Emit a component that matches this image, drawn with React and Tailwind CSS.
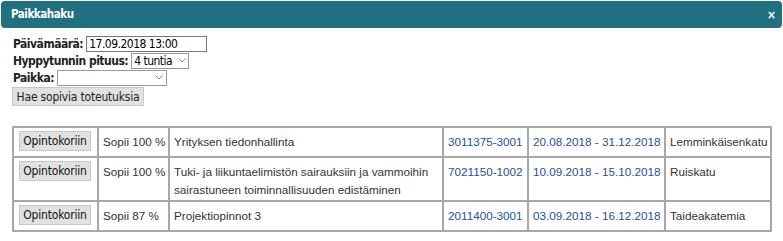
import React from "react";

const rows = [
  { fit: "Sopii 100 %", name: ["Yrityksen tiedonhallinta"], code: "3011375-3001", date: "20.08.2018 - 31.12.2018", place: "Lemminkäisenkatu", h: "h-[30px]" },
  { fit: "Sopii 100 %", name: ["Tuki- ja liikuntaelimistön sairauksiin ja vammoihin", "sairastuneen toiminnallisuuden edistäminen"], code: "7021150-1002", date: "10.09.2018 - 15.10.2018", place: "Ruiskatu", h: "h-[44px]" },
  { fit: "Sopii 87 %", name: ["Projektiopinnot 3"], code: "2011400-3001", date: "03.09.2018 - 16.12.2018", place: "Taideakatemia", h: "h-[30px]" },
];

function Chevron() {
  return (
    <svg width="8" height="5" viewBox="0 0 8 5" className="ml-auto shrink-0">
      <path d="M0.5 0.5 L4 4 L7.5 0.5" fill="none" stroke="#888" strokeWidth="1" />
    </svg>
  );
}

const cell = "border-2 border-[#a8a8a8] pl-[4px] pr-[2px] align-top pt-[5px] leading-[18px] whitespace-nowrap overflow-hidden";

export default function App() {
  const form = { fontFamily: '"DejaVu Sans Condensed", "DejaVu Sans", sans-serif' };
  const arial = { fontFamily: '"Liberation Sans", Arial, sans-serif' };
  return (
    <div className="w-[783px] h-[241px] bg-white overflow-hidden">
      <div className="mx-px mt-px h-[27px] rounded-[4px] bg-[#21707f] flex items-center pl-[10px] pr-[6px]" style={form}>
        <span className="text-white font-bold text-[11.5px] tracking-[-0.45px]">Paikkahaku</span>
        <span className="ml-auto text-white font-bold text-[12px] leading-none">×</span>
      </div>
      <div className="pl-[13px] pt-[7px] text-[12px] tracking-[-0.5px] text-[#222]" style={form}>
        <div className="flex items-center h-[17px]">
          <span className="font-bold">Päivämäärä:</span>
          <div className="ml-[3px] w-[121px] h-[16px] border border-[#777] flex items-center px-[2px] text-black">17.09.2018 13:00</div>
        </div>
        <div className="flex items-center h-[17px]">
          <span className="font-bold">Hyppytunnin pituus:</span>
          <div className="ml-[3px] w-[58px] h-[16px] border border-[#999] flex items-center px-[2px] text-black">4 tuntia<Chevron /></div>
        </div>
        <div className="flex items-center h-[17px]">
          <span className="font-bold">Paikka:</span>
          <div className="ml-[3px] w-[110px] h-[16px] border border-[#999] flex items-center px-[3px]"><Chevron /></div>
        </div>
        <div className="mt-[1px] -ml-px w-[132px] h-[19px] bg-[#e1e1e1] border border-[#c8c8c8] flex items-center justify-center tracking-[-0.2px]">Hae sopivia toteutuksia</div>
      </div>
      <table className="ml-[12px] mt-[20px] w-[758px] table-fixed border-collapse border-2 border-[#a8a8a8] text-[11.7px] text-[#333]" style={arial}>
        <colgroup>
          <col className="w-[85px]" />
          <col className="w-[71px]" />
          <col className="w-[274px]" />
          <col className="w-[85px]" />
          <col className="w-[137px]" />
          <col className="w-[106px]" />
        </colgroup>
        <tbody>
          {rows.map((r, i) => (
            <tr key={i} className={r.h}>
              <td className="border-2 border-[#a8a8a8] px-[5px] align-top pt-[3px]">
                <div className="w-[72px] h-[20px] bg-[#e1e1e1] border border-[#c8c8c8] flex items-center justify-center text-[12px] text-[#111] tracking-[-0.2px]" style={form}>Opintokoriin</div>
              </td>
              <td className={cell}>{r.fit}</td>
              <td className={cell}>
                {r.name.map((l, j) => <div key={j}>{l}</div>)}
              </td>
              <td className={cell + " text-[#2451a0]"}>{r.code}</td>
              <td className={cell + " text-[#2451a0]"}>{r.date}</td>
              <td className={cell}>{r.place}</td>
            </tr>
          ))}
        </tbody>
      </table>
    </div>
  );
}
